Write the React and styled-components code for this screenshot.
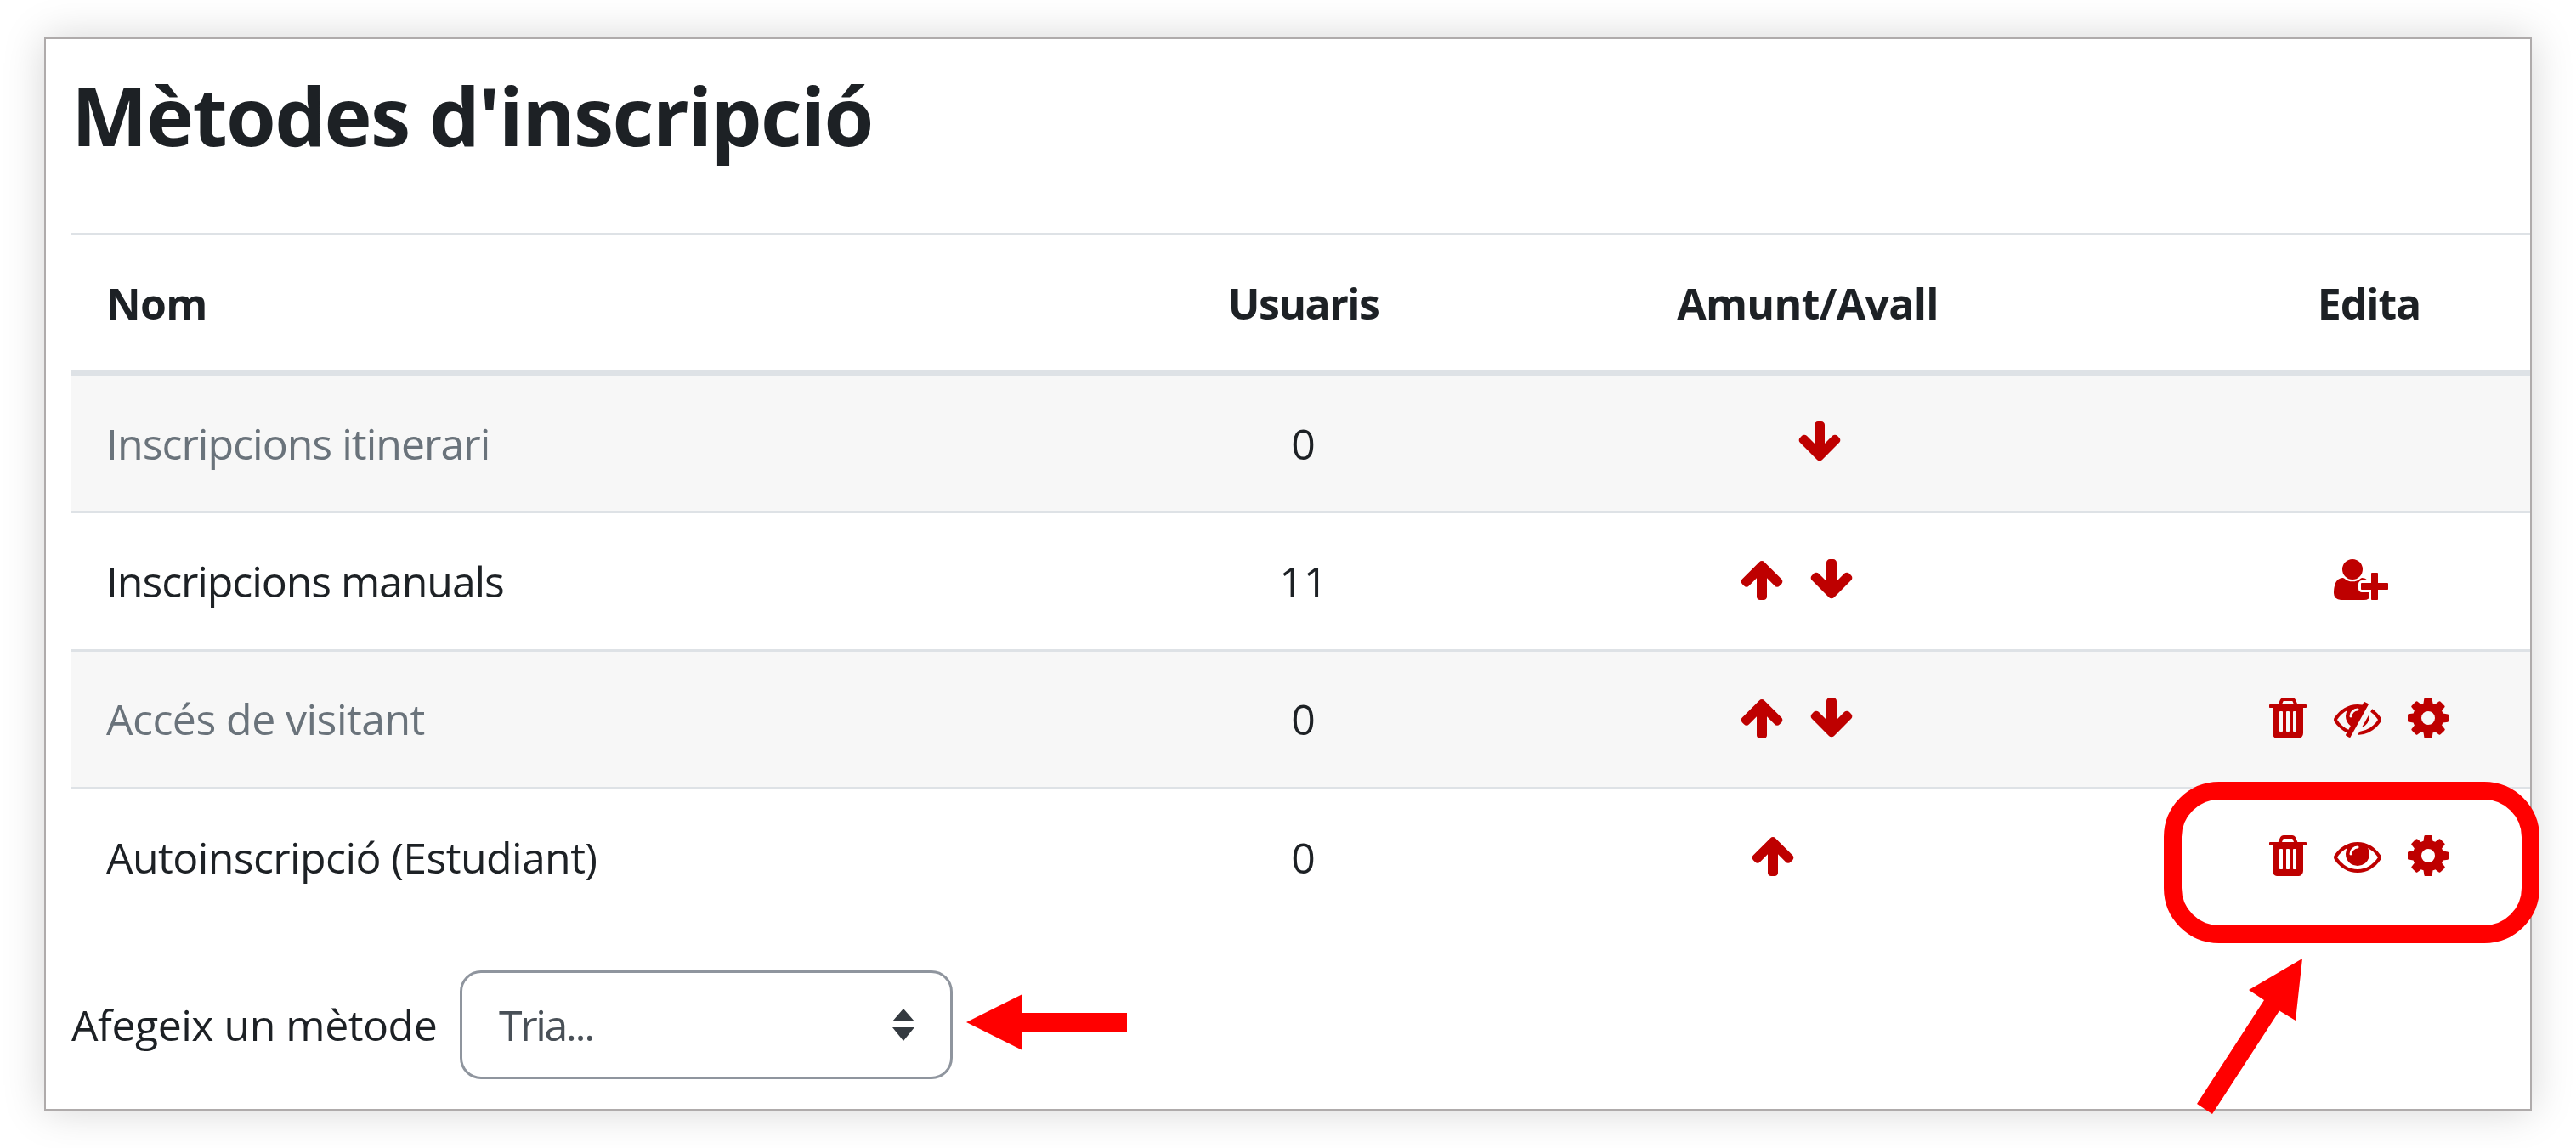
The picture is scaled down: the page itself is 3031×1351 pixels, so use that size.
import React from 'react';
import styled, { createGlobalStyle } from 'styled-components';

const GlobalStyle = createGlobalStyle`
  body {
    margin: 0;
    background: #fff;
    font-family: 'Open Sans', 'Noto Sans', sans-serif;
    font-size: 50px;
    color: #1d2125;
  }
  * { box-sizing: border-box; }
`;

const Page = styled.div`
  position: relative;
  width: 3031px;
  height: 1351px;
  padding: 44px 52px;
  overflow: hidden;
`;

const Panel = styled.main`
  width: 2927px;
  height: 1263px;
  padding: 41px 0 0 30px;
  border: 2px solid #afabab;
  background: #fff;
  box-shadow: 0 0 46px rgba(0, 0, 0, .17);
`;

const Title = styled.h1`
  height: 187px;
  margin: 0;
  font-size: 95px;
  font-weight: 700;
  line-height: 96px;
  letter-spacing: -1.65px;
  white-space: nowrap;
`;

const Table = styled.div`
  display: flex;
  flex-direction: column;
`;

const Row = styled.div`
  display: grid;
  grid-template-columns: 1327px 245px 942px 379px;
  align-items: center;
  height: 162.3px;
  border-top: 3px solid #dee2e6;
  background: ${props => (props.$striped ? '#f7f7f7' : '#fff')};
`;

const HeadRow = styled(Row)`
  height: 165px;
  border-bottom: 3px solid #dee2e6;
`;

const Cell = styled.div`
  display: flex;
  justify-content: center;
  line-height: 70px;
  white-space: nowrap;
`;

const Name = styled(Cell)`
  justify-content: flex-start;
  padding-left: 41px;
  letter-spacing: ${props => props.$spacing}px;
  color: ${props => (props.$dimmed ? '#6a737b' : '#1d2125')};
`;

const HeadCell = styled(Cell)`
  font-weight: 700;
  justify-content: ${props => (props.$left ? 'flex-start' : 'center')};
  padding-left: ${props => (props.$left ? '41px' : '0')};
  letter-spacing: ${props => props.$spacing}px;
`;

const Icon = styled.svg`
  width: 56px;
  height: 56px;
  margin: 0 26.5px 3px 0;
  overflow: visible;
  fill: #be0000;
`;

const Spacer = styled.span`
  width: 55px;
`;

const AddMethod = styled.div`
  display: flex;
  align-items: center;
  height: 128px;
  margin-top: 54px;
`;

const Label = styled.label`
  width: 457px;
  letter-spacing: -.5px;
  white-space: nowrap;
`;

const Select = styled.div`
  display: flex;
  align-items: center;
  justify-content: space-between;
  width: 580px;
  height: 128px;
  padding: 0 42px 0 43px;
  border: 3px solid #8f959e;
  border-radius: 25px;
  letter-spacing: -2.4px;
  color: #495057;
`;

const Caret = styled.svg`
  width: 26px;
  height: 38px;
  fill: #343a40;
`;

const Highlight = styled.div`
  position: absolute;
  left: 2546px;
  top: 920px;
  width: 442px;
  height: 190px;
  border: 21px solid #f00;
  border-radius: 65px;
`;

const Pointer = styled.svg`
  position: absolute;
  left: ${props => props.$left}px;
  top: ${props => props.$top}px;
  fill: #f00;
`;

const paths = {
  up: 'M1675 971q0 51-37 90l-75 75q-38 38-91 38-54 0-90-38l-294-293v704q0 52-37.5 84.5t-90.5 32.5h-128q-53 0-90.5-32.5t-37.5-84.5v-704l-294 293q-36 38-90 38t-90-38l-75-75q-38-38-38-90 0-53 38-91l651-651q35-37 90-37 54 0 91 37l651 651q37 39 37 91z',
  down: 'M1675 832q0 53-37 90l-651 652q-39 37-91 37-53 0-90-37l-651-652q-38-36-38-90 0-53 38-91l74-75q39-37 91-37 53 0 90 37l294 294v-704q0-52 38-90t90-38h128q52 0 90 38t38 90v704l294-294q37-37 90-37 52 0 91 37l75 75q37 39 37 91z',
  enrol: 'M704 896q-159 0-271.5-112.5t-112.5-271.5 112.5-271.5 271.5-112.5 271.5 112.5 112.5 271.5-112.5 271.5-271.5 112.5zm960 128h352q13 0 22.5 9.5t9.5 22.5v192q0 13-9.5 22.5t-22.5 9.5h-352v352q0 13-9.5 22.5t-22.5 9.5h-192q-13 0-22.5-9.5t-9.5-22.5v-352h-352q-13 0-22.5-9.5t-9.5-22.5v-192q0-13 9.5-22.5t22.5-9.5h352v-352q0-13 9.5-22.5t22.5-9.5h192q13 0 22.5 9.5t9.5 22.5v352zm-736 224q0 52 38 90t90 38h256v238q-68 50-171 50h-874q-121 0-194-69t-73-190q0-53 3.5-103.5t14-109 26.5-108.5 43-97.5 62-81 85.5-53.5 111.5-20q19 0 39 17 79 61 154.5 91.5t164.5 30.5 164.5-30.5 154.5-91.5q20-17 39-17 132 0 217 96h-223q-52 0-90 38t-38 90v192z',
  trash: 'M704 1376v-704q0-14-9-23t-23-9h-64q-14 0-23 9t-9 23v704q0 14 9 23t23 9h64q14 0 23-9t9-23zm256 0v-704q0-14-9-23t-23-9h-64q-14 0-23 9t-9 23v704q0 14 9 23t23 9h64q14 0 23-9t9-23zm256 0v-704q0-14-9-23t-23-9h-64q-14 0-23 9t-9 23v704q0 14 9 23t23 9h64q14 0 23-9t9-23zm-544-992h448l-48-117q-7-9-17-11h-317q-10 2-17 11zm928 32v64q0 14-9 23t-23 9h-96v948q0 83-47 143.5t-113 60.5h-832q-66 0-113-58.5t-47-141.5v-952h-96q-14 0-23-9t-9-23v-64q0-14 9-23t23-9h309l70-167q15-37 54-63t79-26h320q40 0 79 26t54 63l70 167h309q14 0 23 9t9 23z',
  eye: 'M1664 960q-152-236-381-353 61 104 61 225 0 185-131.5 316.5t-316.5 131.5-316.5-131.5-131.5-316.5q0-121 61-225-229 117-381 353 133 205 333.5 326.5t434.5 121.5 434.5-121.5 333.5-326.5zm-720-384q0-20-14-34t-34-14q-125 0-214.5 89.5t-89.5 214.5q0 20 14 34t34 14 34-14 14-34q0-86 61-147t147-61q20 0 34-14t14-34zm848 384q0 34-20 69-140 230-376.5 368.5t-499.5 138.5-499.5-139-376.5-368q-20-35-20-69t20-69q140-229 376.5-368t499.5-139 499.5 139 376.5 368q20 35 20 69z',
  eyeSlash: 'M555 1335l78-141q-87-63-136-159t-49-203q0-121 61-225-229 117-381 353 167 258 427 375zm389-759q0-20-14-34t-34-14q-125 0-214.5 89.5t-89.5 214.5q0 20 14 34t34 14 34-14 14-34q0-86 61-147t147-61q20 0 34-14t14-34zm363-191q0 7-1 9-105 188-315 566t-316 567l-49 89q-10 16-28 16-12 0-134-70-16-10-16-28 0-12 44-87-143-65-263.5-173t-208.5-245q-20-31-20-69t20-69q153-235 380-371t496-136q89 0 180 17l54-97q10-16 28-16 5 0 18 6t31 15.5 33 18.5 31.5 18.5 19.5 11.5q16 10 16 27zm37 447q0 139-79 253.5t-209 164.5l280-502q8 45 8 84zm448 128q0 35-20 69-39 64-109 145-150 172-347.5 267t-419.5 95l74-132q212-18 392.5-137t301.5-307q-115-179-282-294l63-112q95 64 182.5 153t144.5 184q20 34 20 69z',
  cog: 'M1152 896q0-106-75-181t-181-75-181 75-75 181 75 181 181 75 181-75 75-181zm512-109v222q0 12-8 23t-20 13l-185 28q-19 54-39 91 35 50 107 138 10 12 10 25t-9 23q-27 37-99 108t-94 71q-12 0-26-9l-138-108q-44 23-91 38-16 136-29 186-7 28-36 28h-222q-14 0-24.5-8.5t-11.5-21.5l-28-184q-49-16-90-37l-141 107q-10 9-25 9-14 0-25-11-126-114-165-168-7-10-7-23 0-12 8-23 15-21 51-66.5t54-70.5q-27-50-41-99l-183-27q-13-2-21-12.5t-8-23.5v-222q0-12 8-23t19-13l186-28q14-46 39-92-40-57-107-138-10-12-10-24 0-10 9-23 26-36 98.5-107.5t94.5-71.5q13 0 26 10l138 107q44-23 91-38 16-136 29-186 7-28 36-28h222q14 0 24.5 8.5t11.5 21.5l28 184q49 16 90 37l142-107q9-9 24-9 13 0 25 10 129 119 165 170 7 8 7 22 0 12-8 23-15 21-51 66.5t-54 70.5q26 50 41 98l183 28q13 2 21 12.5t8 23.5z'
};

const methods = [
  { name: 'Inscripcions itinerari', spacing: -1, users: 0, dimmed: true, move: ['spacer', 'down'], edit: [] },
  { name: 'Inscripcions manuals', spacing: -1.1, users: 11, dimmed: false, move: ['up', 'down'], edit: ['enrol'] },
  { name: 'Accés de visitant', spacing: -.55, users: 0, dimmed: true, move: ['up', 'down'], edit: ['trash', 'eyeSlash', 'cog'] },
  { name: 'Autoinscripció (Estudiant)', spacing: -.62, users: 0, dimmed: false, move: ['up', 'spacer'], edit: ['trash', 'eye', 'cog'] }
];

const renderIcon = (name) => {
  if (name === 'spacer') {
    return <Spacer key={name} />;
  }
  return (
    <Icon key={name} viewBox="0 0 1792 1792">
      <path d={paths[name]} />
    </Icon>
  );
};

const App = () => (
  <Page>
    <GlobalStyle />
    <Panel>
      <Title>Mètodes d'inscripció</Title>
      <Table>
        <HeadRow>
          <HeadCell $left $spacing={-.7}>Nom</HeadCell>
          <HeadCell $spacing={-1.6}>Usuaris</HeadCell>
          <HeadCell $spacing={-.7}>Amunt/Avall</HeadCell>
          <HeadCell $spacing={-1.1}>Edita</HeadCell>
        </HeadRow>
        {methods.map((method, i) => (
          <Row key={method.name} $striped={i % 2 === 0}>
            <Name $dimmed={method.dimmed} $spacing={method.spacing}>{method.name}</Name>
            <Cell>{method.users}</Cell>
            <Cell>{method.move.map(renderIcon)}</Cell>
            <Cell>{method.edit.map(renderIcon)}</Cell>
          </Row>
        ))}
      </Table>
      <AddMethod>
        <Label>Afegeix un mètode</Label>
        <Select>
          Tria...
          <Caret viewBox="0 0 26 38">
            <path d="M13 0L26 15H0zM0 22h26L13 38z" />
          </Caret>
        </Select>
      </AddMethod>
    </Panel>
    <Highlight />
    <Pointer $left={1137} $top={1170} width="189" height="66">
      <path d="M0 33L66 0V22H189V44H66V66z" />
    </Pointer>
    <Pointer $left={2585} $top={1128} width="125" height="184">
      <path d="M124 0L116 73L97 61.5L18 183L0 171L79 49L61 37z" />
    </Pointer>
  </Page>
);

export default App;
